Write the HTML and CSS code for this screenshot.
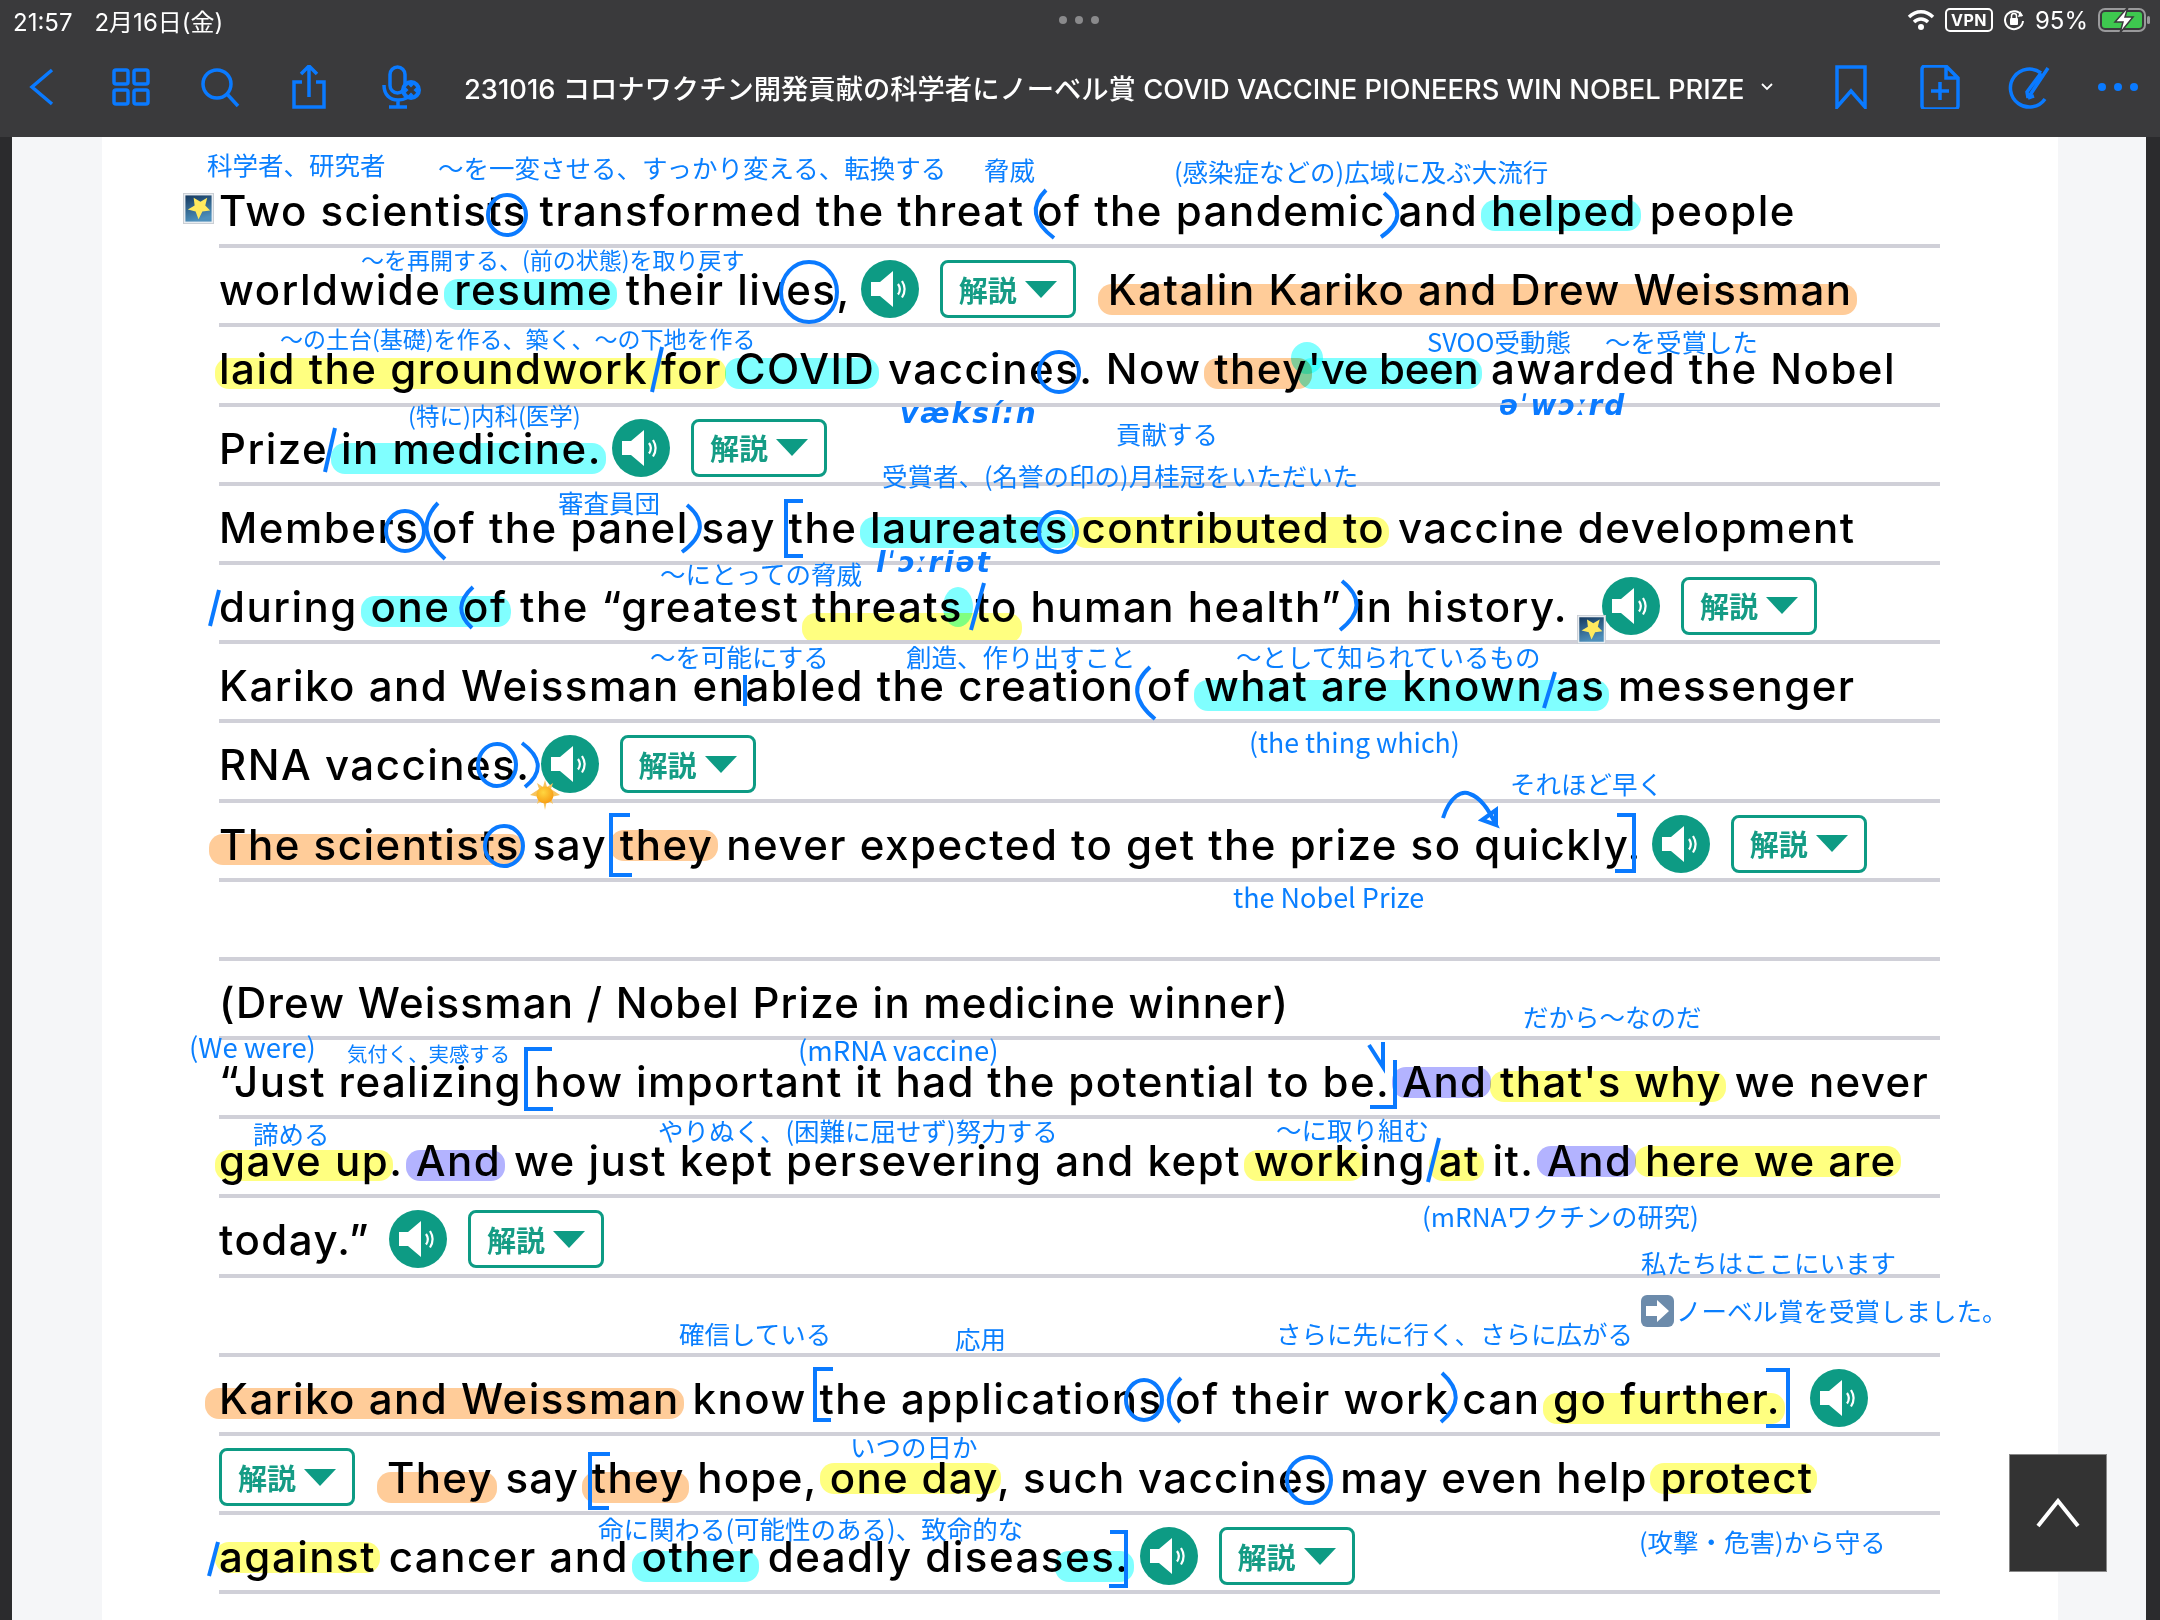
FILE: index.html
```html
<!DOCTYPE html>
<html lang="ja">
<head>
    <meta charset="UTF-8">
    <meta name="viewport" content="width=device-width, initial-scale=1.0">
    <title>Reader</title>
    <link rel="stylesheet" href="styles.css">
</head>
<body>
    <svg width="0" height="0" class="defs">
        <defs>
            <linearGradient id="tile-blue" x1="0" y1="0" x2="0.3" y2="1">
                <stop offset="0" stop-color="#16395f"/>
                <stop offset="1" stop-color="#4d8fbb"/>
            </linearGradient>
            <radialGradient id="sun-core" cx="0.4" cy="0.35" r="0.7">
                <stop offset="0" stop-color="#ffd640"/>
                <stop offset="1" stop-color="#f79a12"/>
            </radialGradient>
        </defs>
        <symbol id="speaker" viewBox="0 0 58 58">
            <circle cx="29" cy="29" r="29" fill="#0d9b84"/>
            <path d="M10 22h9l13-11v36L19 36h-9z" fill="#fff"/>
            <path d="M37 24c2.500 3.500 2.500 7 0 10.500M41 21c3.500 5.500 3.500 11 0 16.500" fill="none" stroke="#fff" stroke-width="2.200"/>
        </symbol>
        <symbol id="star-tile" viewBox="0 0 32 32">
            <rect x="0.500" y="0.500" width="31" height="31" fill="#e9edf1" stroke="#c9ced4"/>
            <rect x="2.500" y="2.500" width="27" height="27" fill="url(#tile-blue)"/>
            <path d="M25 5l-2 8 5 5-8 1-4 8-3-8-8-2 7-4-1-8 7 4z" fill="#ffe95e"/>
        </symbol>
    </svg>

    <header class="topbar">
        <div class="status">
            <div class="status-left"><span>21:57</span><span>2月16日(金)</span></div>
            <div class="status-dots"><i></i><i></i><i></i></div>
            <div class="status-right">
                <svg class="wifi" width="28" height="22" viewBox="0 0 28 22"><path d="M2 8c7-7 17-7 24 0M7 13c4-4 10-4 14 0" fill="none" stroke="#fff" stroke-width="3.4"/><circle cx="14" cy="18" r="3" fill="#fff"/></svg>
                <span class="vpn">VPN</span>
                <svg class="rotlock" width="22" height="24" viewBox="0 0 22 24"><path d="M19 8a9 9 0 1 0 1 5" fill="none" stroke="#fff" stroke-width="2"/><path d="M17 3l3 5-5 1z" fill="#fff"/><rect x="7" y="10" width="8" height="7" rx="1" fill="#fff"/><path d="M8.500 10V8a2.500 2.500 0 0 1 5 0v2" fill="none" stroke="#fff" stroke-width="1.500"/></svg>
                <span>95%</span>
                <svg class="battery" width="54" height="26" viewBox="0 0 54 26"><rect x="1" y="2" width="46" height="22" rx="6" fill="none" stroke="#9a9a9c" stroke-width="2"/><rect x="4" y="5" width="40" height="16" rx="3" fill="#3ec84f"/><rect x="49" y="9" width="3" height="8" rx="1.500" fill="#9a9a9c"/><path d="M30 0L17 15h8l-3 11 13-16h-8z" fill="#fff" stroke="#3a3a3c" stroke-width="1.500"/></svg>
            </div>
        </div>
        <div class="toolbar">
            <div class="tool-group">
                <svg class="tool" viewBox="0 0 44 44"><path d="M32 5L12 22l20 17"/></svg>
                <svg class="tool" viewBox="0 0 44 44"><rect x="5" y="5" width="14" height="14" rx="2"/><rect x="25" y="5" width="14" height="14" rx="2"/><rect x="5" y="25" width="14" height="14" rx="2"/><rect x="25" y="25" width="14" height="14" rx="2"/></svg>
                <svg class="tool" viewBox="0 0 44 44"><circle cx="19" cy="19" r="14"/><path d="M29 29l11 12"/></svg>
                <svg class="tool" viewBox="0 0 44 44"><path d="M15 17H7v25h30V17h-8M22 32V1M14 9l8-8 8 8"/></svg>
                <svg class="tool tool-mic" viewBox="0 0 44 44"><rect x="10" y="2" width="15" height="26" rx="7.500"/><path d="M4 20c0 10 6 15 14 15s10-3 12-6M18 35v7M9 42h18"/><circle cx="31" cy="25" r="10" fill="#0a7aff" stroke="none"/><path d="M27 21l8 8M35 21l-8 8" stroke="#3a3a3c"/></svg>
            </div>
            <div class="doc-title">231016 コロナワクチン開発貢献の科学者にノーベル賞 COVID VACCINE PIONEERS WIN NOBEL PRIZE<svg class="title-caret" width="12" height="8" viewBox="0 0 12 8"><path d="M1 1l5 5 5-5" fill="none" stroke="#fff" stroke-width="1.800"/></svg></div>
            <div class="tool-group tool-group-right">
                <svg class="tool" viewBox="0 0 44 44"><path d="M8 2h28v40L22 26 8 42z"/></svg>
                <svg class="tool" viewBox="0 0 44 44"><path d="M28 1H7a3 3 0 0 0-3 3v37a3 3 0 0 0 3 3h30a3 3 0 0 0 3-3V13zM28 1v12h12M22 17v18M13 26h18"/></svg>
                <svg class="tool" viewBox="0 0 44 44"><path d="M34 8A19 19 0 1 0 38 34M21 33L41 3M21 33l-1-6 14-19M21 33l6-2"/></svg>
                <svg class="tool" viewBox="0 0 44 44"><circle cx="6" cy="22" r="4" class="solid"/><circle cx="22" cy="22" r="4" class="solid"/><circle cx="38" cy="22" r="4" class="solid"/></svg>
            </div>
        </div>
    </header>

    <main class="reader">
        <div class="edge"></div>
        <div class="margin-left"></div>
        <section class="sheet">
            <div class="row">Two scientists transformed the threat of the pandemic and <span class="hl cyan">helped</span> people</div>
            <div class="row">worldwide <span class="hl cyan">resume</span> their lives,<a class="speak"><svg><use href="#speaker"/></svg></a><a class="kaisetsu">解説<i></i></a><span class="gap"></span><span class="hl orange low">Katalin Kariko and Drew Weissman</span></div>
            <div class="row"><span class="hl yellow flush">laid the groundwork for</span> <span class="hl cyan">COVID</span> vaccines. Now <span class="hl orange">they</span><span class="hl cyan tight-word">'ve been</span> awarded the Nobel</div>
            <div class="row">Prize <span class="hl cyan low">in medicine.</span><a class="speak"><svg><use href="#speaker"/></svg></a><a class="kaisetsu">解説<i></i></a></div>
            <div class="row">Members of the panel say the <span class="hl cyan">laureates</span> <span class="hl yellow">contributed to</span> vaccine development</div>
            <div class="row">during <span class="hl cyan">one of</span> the “greatest <span class="hl yellow sunk">threats to</span> human health” in history.<a class="speak speak-far"><svg><use href="#speaker"/></svg></a><a class="kaisetsu">解説<i></i></a></div>
            <div class="row">Kariko and Weissman enabled the creation of <span class="hl cyan low">what are known as</span> messenger</div>
            <div class="row">RNA vaccines.<a class="speak"><svg><use href="#speaker"/></svg></a><a class="kaisetsu">解説<i></i></a></div>
            <div class="row"><span class="hl orange">The scientists</span> say <span class="hl orange high">they</span> never expected to get the prize so quickly.<a class="speak"><svg><use href="#speaker"/></svg></a><a class="kaisetsu">解説<i></i></a></div>
            <div class="row"></div>
            <div class="row row-tight">(Drew Weissman / Nobel Prize in medicine winner)</div>
            <div class="row row-snug">“Just realizing how important it had the potential to be. <span class="hl purple high">And</span> <span class="hl yellow">that's why</span> we never</div>
            <div class="row"><span class="hl yellow flush">gave up</span>. <span class="hl purple">And</span> we just kept persevering and kept <span class="hl yellow">work</span>ing <span class="hl yellow">at</span> it. <span class="hl purple high">And</span> <span class="hl yellow high">here we are</span></div>
            <div class="row">today.”<a class="speak speak-mid"><svg><use href="#speaker"/></svg></a><a class="kaisetsu">解説<i></i></a></div>
            <div class="row"></div>
            <div class="row"><span class="hl orange outset">Kariko and Weissman</span> know the applications of their work can <span class="hl yellow low">go further.</span><a class="speak speak-wide"><svg><use href="#speaker"/></svg></a></div>
            <div class="row row-tight-2"><a class="kaisetsu kaisetsu-first">解説<i></i></a><span class="gap"></span><span class="hl orange low">They</span> say <span class="hl orange low">they</span> hope, <span class="hl yellow high">one day</span>, such vaccines may even help <span class="hl yellow high">protect</span></div>
            <div class="row"><span class="hl yellow high flush">against</span> cancer and <span class="hl cyan low">other</span> deadly diseas<span class="hl cyan low">es.</span><a class="speak"><svg><use href="#speaker"/></svg></a><a class="kaisetsu">解説<i></i></a></div>
        </section>
        <div class="margin-right"></div>
        <div class="edge edge-right"></div>
    </main>

    <!-- notes written over the page -->
    <div class="overlay">
        <span class="blob blob-1"></span>
        <span class="blob blob-2"></span>

        <span class="note n1">科学者、研究者</span>
        <span class="note n2">～を一変させる、すっかり変える、転換する</span>
        <span class="note n3">脅威</span>
        <span class="note n4">(感染症などの)広域に及ぶ大流行</span>
        <span class="note n5">～を再開する、(前の状態)を取り戻す</span>
        <span class="note n6">～の土台(基礎)を作る、築く、～の下地を作る</span>
        <span class="note n7">SVOO受動態</span>
        <span class="note n8">～を受賞した</span>
        <span class="note n9">(特に)内科(医学)</span>
        <span class="note n10">貢献する</span>
        <span class="note n11">受賞者、(名誉の印の)月桂冠をいただいた</span>
        <span class="note n12">審査員団</span>
        <span class="note n13">～にとっての脅威</span>
        <span class="note n14">～を可能にする</span>
        <span class="note n15">創造、作り出すこと</span>
        <span class="note n16">～として知られているもの</span>
        <span class="note n17">(the thing which)</span>
        <span class="note n18">それほど早く</span>
        <span class="note n19">the Nobel Prize</span>
        <span class="note n20">だから～なのだ</span>
        <span class="note n21">(We were)</span>
        <span class="note n22">気付く、実感する</span>
        <span class="note n23">(mRNA vaccine)</span>
        <span class="note n24">諦める</span>
        <span class="note n25">やりぬく、(困難に屈せず)努力する</span>
        <span class="note n26">～に取り組む</span>
        <span class="note n27">(mRNAワクチンの研究)</span>
        <span class="note n28">私たちはここにいます</span>
        <span class="note n29">ノーベル賞を受賞しました。</span>
        <span class="note n30">確信している</span>
        <span class="note n31">応用</span>
        <span class="note n32">さらに先に行く、さらに広がる</span>
        <span class="note n33">いつの日か</span>
        <span class="note n34">命に関わる(可能性のある)、致命的な</span>
        <span class="note n35">(攻撃・危害)から守る</span>

        <span class="ipa ipa1">væksí:n</span>
        <span class="ipa ipa2">əˈwɔːrd</span>
        <span class="ipa ipa3">lˈɔːriət</span>

        <svg class="pen" width="2160" height="1620" viewBox="0 0 2160 1620">
            <ellipse cx="507" cy="215" rx="19" ry="20"/>
            <path d="M1046 190Q1022 214 1054 238"/>
            <path d="M1384 193Q1412 216 1381 237"/>
            <ellipse cx="809" cy="292" rx="28" ry="30"/>
            <path d="M662 347L652 392"/>
            <ellipse cx="1059" cy="372" rx="20" ry="20"/>
            <path d="M335 428L325 472"/>
            <ellipse cx="405" cy="531" rx="19" ry="20"/>
            <path d="M438 503Q412 530 445 559"/>
            <path d="M687 505Q715 528 682 552"/>
            <path d="M803 501H786V556H803"/>
            <ellipse cx="1058" cy="532" rx="19" ry="20"/>
            <path d="M219 590L210 626"/>
            <path d="M473 587Q450 608 472 628"/>
            <path d="M984 583L971 630"/>
            <path d="M1342 581Q1372 605 1340 630"/>
            <path d="M745 675V706"/>
            <path d="M1150 667Q1122 692 1155 719"/>
            <path d="M1555 672L1544 708"/>
            <ellipse cx="497" cy="765" rx="19" ry="21"/>
            <path d="M522 743Q552 765 525 787"/>
            <ellipse cx="504" cy="846" rx="19" ry="20"/>
            <path d="M630 815H611V875H632"/>
            <path d="M1443 818C1450 796 1462 790 1470 794C1482 798 1490 812 1496 825L1482 820L1496 810V825"/>
            <path d="M1617 815H1634V871H1615"/>
            <path d="M552 1049H526V1109H553"/>
            <path d="M1369 1045L1383 1067V1042"/>
            <path d="M1395 1060V1107H1370"/>
            <path d="M1439 1138L1428 1182"/>
            <path d="M833 1369H815V1420H831"/>
            <ellipse cx="1144" cy="1400" rx="18" ry="20"/>
            <path d="M1181 1378Q1157 1400 1180 1422"/>
            <path d="M1442 1373Q1470 1398 1441 1422"/>
            <path d="M1766 1370H1788V1426H1766"/>
            <path d="M610 1454H590V1508H609"/>
            <ellipse cx="1309" cy="1480" rx="22" ry="23"/>
            <path d="M218 1542L209 1576"/>
            <path d="M1110 1532H1126V1586H1109"/>
        </svg>

        <svg class="sticker st1"><use href="#star-tile"/></svg>
        <svg class="sticker st2"><use href="#star-tile"/></svg>
        <svg class="sticker st3" viewBox="0 0 30 30">
            <path d="M15 0l2 7 6-4-2 6 9 6-9 2 2 7-6-4-2 10-2-10-6 4 2-7-9-2 9-6-2-6 6 4z" fill="#f7c45f"/>
            <circle cx="15" cy="15" r="8.500" fill="url(#sun-core)"/>
        </svg>
        <svg class="sticker st4" viewBox="0 0 33 32">
            <rect width="33" height="32" rx="6" fill="#6c8bab"/>
            <path d="M5 11h11V5l12 11-12 11v-6H5z" fill="#fff"/>
        </svg>
    </div>

    <a class="to-top"><svg width="44" height="30" viewBox="0 0 44 30"><path d="M2 28L22 3l20 25" fill="none" stroke="#fff" stroke-width="4"/></svg></a>
</body>
</html>
```

FILE: styles.css
```css
* {
    box-sizing: border-box;
}

html, body {
    margin: 0;
    padding: 0;
}

body {
    position: relative;
    width: 2160px;
    height: 1620px;
    overflow: hidden;
    background: #fff;
    font-family: 'Inter', 'Noto Sans CJK JP', sans-serif;
}

.defs {
    position: absolute;
}

/* top bar */
.topbar {
    height: 137px;
    background: #3a3a3c;
    color: #fff;
}

.status {
    height: 40px;
    padding: 0 8px 0 13px;
    display: flex;
    justify-content: space-between;
    align-items: center;
    font-size: 24px;
    position: relative;
}

.status-left {
    display: flex;
    align-items: baseline;
    gap: 22px;
}

.status-dots {
    position: absolute;
    left: 1059px;
    display: flex;
    gap: 8px;
}

.status-dots i {
    width: 8px;
    height: 8px;
    border-radius: 50%;
    background: #8a8a8c;
}

.status-right {
    display: flex;
    align-items: center;
    gap: 10px;
}

.vpn {
    font-size: 16px;
    font-weight: bold;
    border: 2px solid #fff;
    border-radius: 5px;
    padding: 0 4px;
    letter-spacing: 0.5px;
}

.toolbar {
    height: 97px;
    padding: 0 20px 3px 20px;
    display: flex;
    align-items: center;
}

.tool-group {
    display: flex;
    gap: 45px;
}

.tool-group-right {
    margin-left: auto;
}

.tool {
    width: 44px;
    height: 44px;
    fill: none;
    stroke: #0a7aff;
    stroke-width: 3.5;
}

.tool-mic {
    margin-left: 4px;
    margin-right: -4px;
}

.tool .solid {
    fill: #0a7aff;
    stroke: none;
}

.doc-title {
    margin-left: 44px;
    font-size: 27.3px;
    font-weight: 500;
    white-space: nowrap;
    display: flex;
    align-items: center;
    gap: 16px;
}

/* page */
.reader {
    height: 1483px;
    display: flex;
}

.edge {
    width: 12px;
    background: #2b2b2d;
}

.edge-right {
    width: 14px;
}

.margin-left {
    width: 90px;
    background: #f5f6f8;
}

.margin-right {
    width: 88px;
    background: #f5f6f8;
}

.sheet {
    flex: 1;
    background: #fff;
    padding: 32px 0 0 117px;
    isolation: isolate;
    color: #000;
}

.row {
    width: 1721px;
    height: 79.2px;
    padding-top: 4px;
    line-height: 75px;
    font-size: 42px;
    font-weight: 500;
    letter-spacing: 1.5px;
    white-space: nowrap;
    border-bottom: 4px solid #d0d0d8;
}

.row-snug {
    letter-spacing: 1.39px;
}

.row-tight-2 {
    letter-spacing: 1.3px;
}

.row-tight {
    letter-spacing: 1.2px;
}

.tight-word {
    letter-spacing: -0.3px;
}

.gap {
    display: inline-block;
    width: 32px;
}

/* marker highlights */
.hl {
    position: relative;
}

.hl::before {
    content: "";
    position: absolute;
    left: -10px;
    right: -4px;
    top: 15px;
    bottom: 5px;
    border-radius: 14px;
    z-index: -1;
    mix-blend-mode: multiply;
}

.hl.high::before {
    top: 11px;
    bottom: 9px;
}

.hl.low::before {
    top: 20px;
    bottom: 0;
}

.hl.sunk::before {
    top: 32px;
    bottom: -11px;
}

.hl.flush::before {
    left: -4px;
}

.hl.outset::before {
    left: -14px;
}

.yellow::before { background: #ffff80; }
.cyan::before { background: #80ffff; }
.orange::before { background: #ffcc99; }
.purple::before { background: #b3b3ff; }

/* speaker and explain button */
.speak {
    display: inline-block;
    width: 58px;
    height: 58px;
    margin: 0 0 9px 10px;
    vertical-align: middle;
}

.speak svg {
    display: block;
    width: 58px;
    height: 58px;
}

.speak-mid {
    margin-left: 19px;
}

.speak-wide {
    margin-left: 29px;
}

.speak-far {
    margin-left: 34px;
}

.kaisetsu {
    display: inline-flex;
    align-items: center;
    gap: 8px;
    width: 136px;
    height: 58px;
    margin: 0 0 9px 21px;
    padding-left: 16px;
    vertical-align: middle;
    border: 3.5px solid #0d9b84;
    border-radius: 8px;
    color: #159c85;
    font-family: 'Noto Sans CJK JP', sans-serif;
    font-size: 29px;
    font-weight: bold;
    line-height: 1;
    letter-spacing: 0;
}

.kaisetsu i {
    width: 0;
    height: 0;
    border-left: 16px solid transparent;
    border-right: 16px solid transparent;
    border-top: 17px solid #0d9b84;
}

.kaisetsu-first {
    margin-left: 0;
}

/* overlay on the free canvas */
.overlay {
    position: absolute;
    left: 0;
    top: 0;
    width: 2160px;
    height: 1620px;
    pointer-events: none;
}

.pen {
    position: absolute;
    left: 0;
    top: 0;
    fill: none;
    stroke: #0a7aff;
    stroke-width: 4;
}

.note {
    position: absolute;
    transform: translateY(calc(-50% - 1px));
    color: #0a7fff;
    font-family: 'Noto Sans CJK JP', sans-serif;
    font-size: 25.5px;
    line-height: 1.2;
    white-space: nowrap;
}

.n1 { left: 207px; top: 165px; }
.n2 { left: 438px; top: 168px; }
.n3 { left: 984px; top: 170px; }
.n4 { left: 1174px; top: 172px; }
.n5 { left: 361px; top: 261px; font-size: 23px; }
.n6 { left: 280px; top: 340px; font-size: 23px; }
.n7 { left: 1427px; top: 342px; }
.n8 { left: 1605px; top: 342px; }
.n9 { left: 408px; top: 416px; font-size: 23.5px; }
.n10 { left: 1116px; top: 434px; }
.n11 { left: 882px; top: 476px; }
.n12 { left: 558px; top: 503px; }
.n13 { left: 660px; top: 574px; }
.n14 { left: 650px; top: 657px; }
.n15 { left: 906px; top: 657px; }
.n16 { left: 1236px; top: 657px; }
.n17 { left: 1249px; top: 743px; font-size: 26.7px; }
.n18 { left: 1510px; top: 784px; }
.n19 { left: 1233px; top: 898px; font-size: 27px; }
.n20 { left: 1523px; top: 1017px; }
.n21 { left: 189px; top: 1047px; font-size: 27.5px; }
.n22 { left: 347px; top: 1054px; font-size: 20.4px; }
.n23 { left: 798px; top: 1050px; font-size: 27.5px; }
.n24 { left: 253px; top: 1134px; }
.n25 { left: 658px; top: 1131px; }
.n26 { left: 1276px; top: 1130px; }
.n27 { left: 1422px; top: 1218px; font-size: 26.2px; }
.n28 { left: 1641px; top: 1263px; }
.n29 { left: 1676px; top: 1311px; }
.n30 { left: 679px; top: 1334px; }
.n31 { left: 955px; top: 1339px; }
.n32 { left: 1276px; top: 1334px; }
.n33 { left: 850px; top: 1447px; }
.n34 { left: 598px; top: 1529px; }
.n35 { left: 1639px; top: 1542px; }

.ipa {
    position: absolute;
    transform: translateY(-50%);
    color: #0a7aff;
    font-family: 'DejaVu Sans', sans-serif;
    font-size: 28px;
    font-weight: bold;
    font-style: italic;
    white-space: nowrap;
}

.ipa1 { left: 900px; top: 413px; letter-spacing: 2px; }
.ipa2 { left: 1499px; top: 405px; letter-spacing: 2px; }
.ipa3 { left: 876px; top: 562px; letter-spacing: 2px; }

.blob {
    position: absolute;
    border-radius: 50%;
    background: #80ffff;
    mix-blend-mode: multiply;
}

.blob-1 {
    left: 1291px;
    top: 342px;
    width: 32px;
    height: 32px;
}

.blob-2 {
    left: 943px;
    top: 587px;
    width: 30px;
    height: 40px;
}

.sticker {
    position: absolute;
}

.st1 { left: 183px; top: 193px; width: 31px; height: 31px; }
.st2 { left: 1576px; top: 615px; width: 31px; height: 29px; }
.st3 { left: 530px; top: 780px; width: 30px; height: 30px; }
.st4 { left: 1641px; top: 1295px; width: 33px; height: 32px; }

.to-top {
    position: absolute;
    left: 2009px;
    top: 1454px;
    width: 98px;
    height: 118px;
    background: #333;
    border: 1px solid #888;
    display: flex;
    align-items: center;
    justify-content: center;
}
```
